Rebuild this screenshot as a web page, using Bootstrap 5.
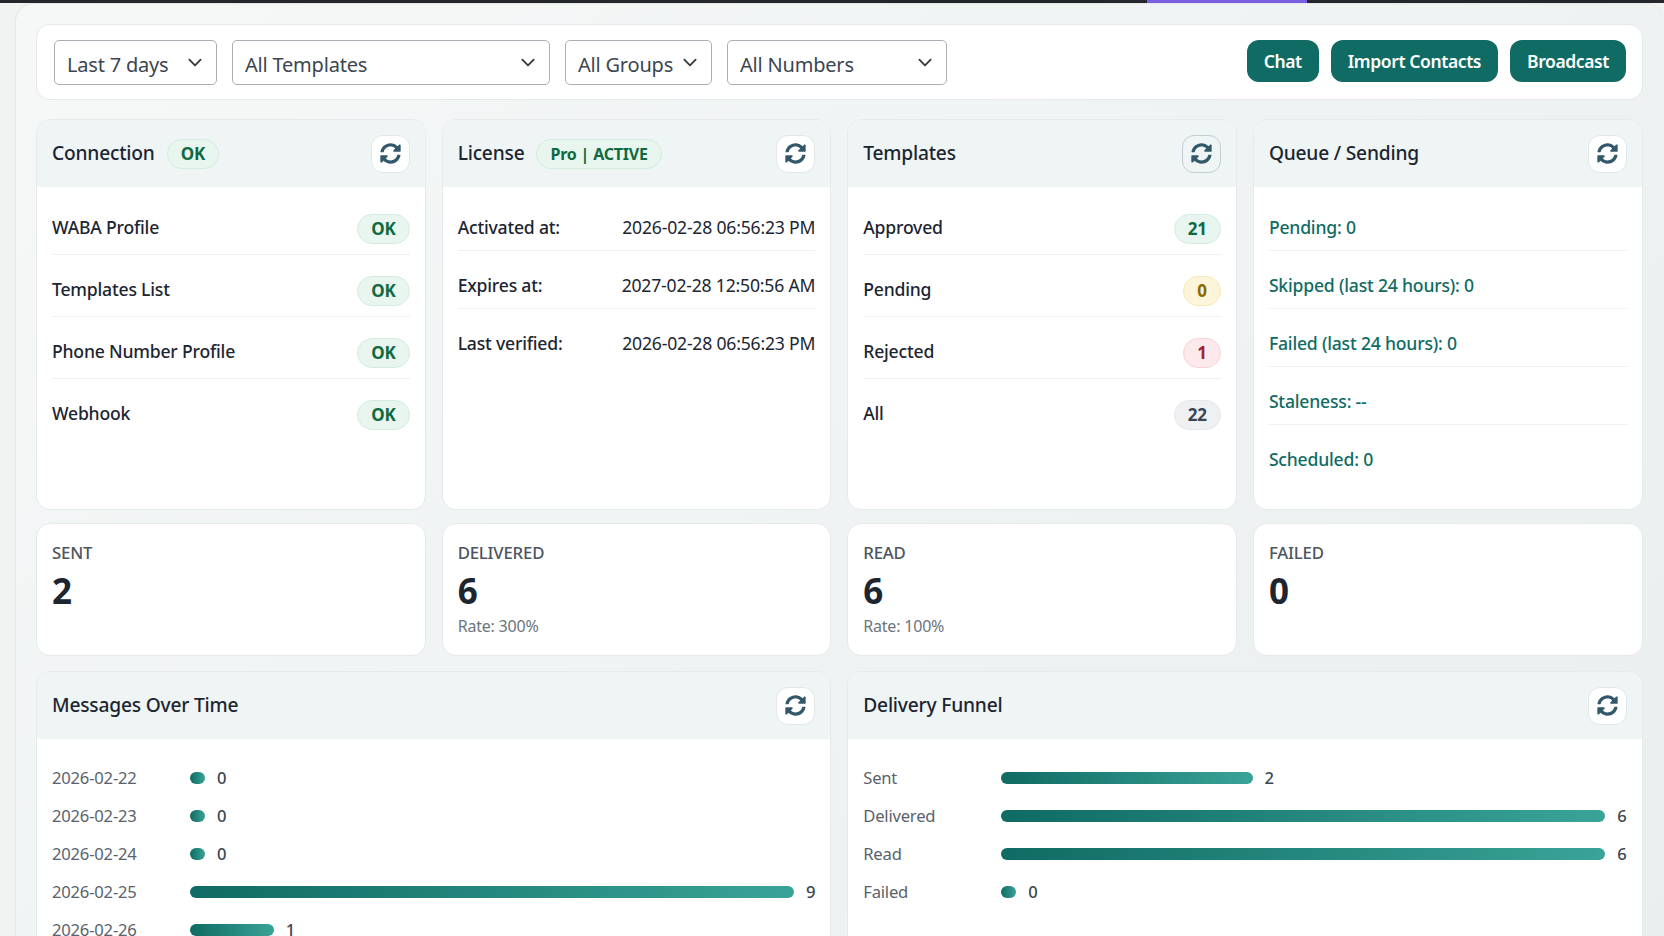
<!DOCTYPE html>
<html lang="en">
<head>
<meta charset="utf-8">
<title>Dashboard</title>
<link rel="stylesheet" href="https://cdn.jsdelivr.net/npm/bootstrap@5.3.0/dist/css/bootstrap.min.css">
<style>
html,body{height:100%;overflow:hidden}
body{background:#f1f2f2;font-family:"Noto Sans","Open Sans",sans-serif;font-size:17.6px;color:#1c2530;letter-spacing:-.2px}
.topstrip{height:3px;background:#23272b;display:flex}
.topstrip i{display:block;width:160px;margin-left:1147px;background:#7a5fe0}
.shell{margin-left:15px;padding:20px 21.5px 0 20px;min-height:100%;border:1px solid #e4e7e7;border-width:1px 0 0 1px;border-radius:18px 18px 0 0;background:linear-gradient(135deg,#f6f8f8,#e9eeee)}
.panel{border:1px solid #e6eaea;border-radius:14px;background:#fff}
.filterbar{height:76px;padding:0 15.5px 0 17px;margin-bottom:19px}
.pick-group{gap:15px}
.act-group{gap:12px;margin-bottom:2px}
.pick{height:45px;border:1px solid #a9afb5;border-radius:5px;font-size:20px;color:#3c4650;padding:6px 38px 0 12px;background-position:right 11px center;background-size:20px 15px;letter-spacing:-.2px}
.pick-a{width:163px}.pick-b{width:318px}.pick-c{width:147px}.pick-d{width:220px}
.act{height:42px;border-radius:12px;background:#0f6b63;border:0;color:#fff;font-size:17.5px;font-weight:600;padding:0 17px;letter-spacing:-.4px}
.act:hover{background:#0f6b63;color:#fff}
.tile{border:1px solid #e6eaea;border-radius:14px;overflow:hidden;background:#fff;--bs-card-bg:#fff}
.tile .card-header{height:67px;background:#eff4f5;border:0;padding:0 15px;display:flex;align-items:center;gap:12px;border-radius:0}
.tile-title{font-size:19.2px;font-weight:500;color:#1c2530}
.tall{height:391px}
.gap-after-top{margin-bottom:13px}
.gap-after-stats{margin-bottom:15px}
.spin{width:39px;height:38px;margin-left:auto;border:1px solid #e3e7ea;border-radius:12px;background:#fff;padding:0;display:flex;align-items:center;justify-content:center}
.spin svg{width:21px;height:21px;fill:#33586a}
.spin-on{background:#eff4f5;border-color:#c3cdd6}
.pill{display:inline-flex;align-items:center;justify-content:center;height:30px;padding:0 13px;border-radius:15px;border:1px solid #d2ecdd;background:#e9f6ef;color:#0f6b3f;font-weight:700;font-size:17px}
.pill-wide{font-size:16px}
.pill-warn{background:#fdf5d9;border-color:#f6e9b5;color:#8a6a00}
.pill-bad{background:#fce9eb;border-color:#f6d3d7;color:#a3212f}
.pill-mute{background:#eef0f2;border-color:#e5e8eb;color:#3a4652}
.tile .card-body{padding:6px 15px}
.line{border-bottom:1px solid #eef0f1;display:flex;align-items:center;justify-content:space-between}
.line:last-child{border-bottom:0}
.line-a{height:62px;padding-top:10px;font-weight:500}
.line-a>span:first-child{margin-top:-3px}
.line-b{height:58px;padding-top:11px}
.line-b b{font-weight:500}
.line-c{height:58px;padding-top:11px;color:#0f6b63;font-weight:500}
.stat{height:133px}
.tile .stat-body{padding:17.5px 15px}
.stat-name{font-size:16.8px;color:#4c5560;line-height:22px;font-weight:500}
.stat-num{font-size:35px;font-weight:700;line-height:46px;color:#1c2530;margin-top:4px}
.stat-sub{font-size:16px;color:#6c757d;line-height:22px;margin-top:1px}
.tile .chart-body{padding:20.5px 15px}
.barline{height:38px;display:flex;align-items:center;font-size:16.6px;color:#59626c}
.barname{width:138px;flex:none}
.bartrack{flex:1;display:flex;align-items:center;gap:12px;min-width:0}
.barfill{height:12px;border-radius:6px;background:linear-gradient(90deg,#0f6b63,#3aa397);flex:none}
.barval{color:#3c4650;font-weight:500}
</style>
</head>
<body>
<div class="topstrip"><i></i></div>
<main class="shell">
  <div class="panel filterbar d-flex align-items-center">
    <div class="d-flex pick-group">
      <select class="form-select pick pick-a"><option>Last 7 days</option></select>
      <select class="form-select pick pick-b"><option>All Templates</option></select>
      <select class="form-select pick pick-c"><option>All Groups</option></select>
      <select class="form-select pick pick-d"><option>All Numbers</option></select>
    </div>
    <div class="d-flex act-group ms-auto">
      <button class="btn act">Chat</button>
      <button class="btn act">Import Contacts</button>
      <button class="btn act">Broadcast</button>
    </div>
  </div>

  <svg width="0" height="0" class="d-block"><defs><symbol id="sync" viewBox="0 0 512 512"><path d="M370.72 133.28C339.458 104.008 298.888 87.962 255.848 88c-77.458.068-144.328 53.178-162.791 126.85-1.344 5.363-6.122 9.15-11.651 9.15H24.103c-7.498 0-13.194-6.807-11.807-14.176C33.933 94.924 134.813 8 256 8c66.448 0 126.791 26.136 171.315 68.685L463.03 40.97C478.149 25.851 504 36.559 504 57.941V192c0 13.255-10.745 24-24 24H345.941c-21.382 0-32.09-25.851-16.971-40.971l41.75-41.749zM32 296h134.059c21.382 0 32.09 25.851 16.971 40.971l-41.75 41.75c31.262 29.273 71.835 45.319 114.876 45.28 77.418-.07 144.315-53.144 162.787-126.849 1.344-5.363 6.122-9.15 11.651-9.15h57.304c7.498 0 13.193 6.807 11.807 14.176C478.067 417.076 377.187 504 256 504c-66.448 0-126.791-26.136-171.315-68.685L48.97 471.03C33.851 486.149 8 475.441 8 454.059V320c0-13.255 10.745-24 24-24z"/></symbol></defs></svg>

  <div class="row g-3 gap-after-top">
    <div class="col-3">
      <div class="card tile tall">
        <div class="card-header"><span class="tile-title">Connection</span><span class="pill">OK</span><button class="btn spin"><svg><use href="#sync"/></svg></button></div>
        <div class="card-body">
          <div class="line line-a"><span>WABA Profile</span><span class="pill">OK</span></div>
          <div class="line line-a"><span>Templates List</span><span class="pill">OK</span></div>
          <div class="line line-a"><span>Phone Number Profile</span><span class="pill">OK</span></div>
          <div class="line line-a"><span>Webhook</span><span class="pill">OK</span></div>
        </div>
      </div>
    </div>
    <div class="col-3">
      <div class="card tile tall">
        <div class="card-header"><span class="tile-title">License</span><span class="pill pill-wide">Pro | ACTIVE</span><button class="btn spin"><svg><use href="#sync"/></svg></button></div>
        <div class="card-body">
          <div class="line line-b"><b>Activated at:</b><span>2026-02-28 06:56:23 PM</span></div>
          <div class="line line-b"><b>Expires at:</b><span>2027-02-28 12:50:56 AM</span></div>
          <div class="line line-b"><b>Last verified:</b><span>2026-02-28 06:56:23 PM</span></div>
        </div>
      </div>
    </div>
    <div class="col-3">
      <div class="card tile tall">
        <div class="card-header"><span class="tile-title">Templates</span><button class="btn spin spin-on"><svg><use href="#sync"/></svg></button></div>
        <div class="card-body">
          <div class="line line-a"><span>Approved</span><span class="pill">21</span></div>
          <div class="line line-a"><span>Pending</span><span class="pill pill-warn">0</span></div>
          <div class="line line-a"><span>Rejected</span><span class="pill pill-bad">1</span></div>
          <div class="line line-a"><span>All</span><span class="pill pill-mute">22</span></div>
        </div>
      </div>
    </div>
    <div class="col-3">
      <div class="card tile tall">
        <div class="card-header"><span class="tile-title">Queue / Sending</span><button class="btn spin"><svg><use href="#sync"/></svg></button></div>
        <div class="card-body">
          <div class="line line-c">Pending: 0</div>
          <div class="line line-c">Skipped (last 24 hours): 0</div>
          <div class="line line-c">Failed (last 24 hours): 0</div>
          <div class="line line-c">Staleness: --</div>
          <div class="line line-c">Scheduled: 0</div>
        </div>
      </div>
    </div>
  </div>

  <div class="row g-3 gap-after-stats">
    <div class="col-3"><div class="card tile stat"><div class="card-body stat-body"><div class="stat-name">SENT</div><div class="stat-num">2</div></div></div></div>
    <div class="col-3"><div class="card tile stat"><div class="card-body stat-body"><div class="stat-name">DELIVERED</div><div class="stat-num">6</div><div class="stat-sub">Rate: 300%</div></div></div></div>
    <div class="col-3"><div class="card tile stat"><div class="card-body stat-body"><div class="stat-name">READ</div><div class="stat-num">6</div><div class="stat-sub">Rate: 100%</div></div></div></div>
    <div class="col-3"><div class="card tile stat"><div class="card-body stat-body"><div class="stat-name">FAILED</div><div class="stat-num">0</div></div></div></div>
  </div>

  <div class="row g-3">
    <div class="col-6">
      <div class="card tile h-100">
        <div class="card-header"><span class="tile-title">Messages Over Time</span><button class="btn spin"><svg><use href="#sync"/></svg></button></div>
        <div class="card-body chart-body">
          <div class="barline"><span class="barname">2026-02-22</span><div class="bartrack"><div class="barfill" style="width:15px"></div><span class="barval">0</span></div></div>
          <div class="barline"><span class="barname">2026-02-23</span><div class="bartrack"><div class="barfill" style="width:15px"></div><span class="barval">0</span></div></div>
          <div class="barline"><span class="barname">2026-02-24</span><div class="bartrack"><div class="barfill" style="width:15px"></div><span class="barval">0</span></div></div>
          <div class="barline"><span class="barname">2026-02-25</span><div class="bartrack"><div class="barfill" style="width:96.6%"></div><span class="barval">9</span></div></div>
          <div class="barline"><span class="barname">2026-02-26</span><div class="bartrack"><div class="barfill" style="width:13.4%"></div><span class="barval">1</span></div></div>
        </div>
      </div>
    </div>
    <div class="col-6">
      <div class="card tile h-100">
        <div class="card-header"><span class="tile-title">Delivery Funnel</span><button class="btn spin"><svg><use href="#sync"/></svg></button></div>
        <div class="card-body chart-body">
          <div class="barline"><span class="barname">Sent</span><div class="bartrack"><div class="barfill" style="width:40.2%"></div><span class="barval">2</span></div></div>
          <div class="barline"><span class="barname">Delivered</span><div class="bartrack"><div class="barfill" style="width:96.6%"></div><span class="barval">6</span></div></div>
          <div class="barline"><span class="barname">Read</span><div class="bartrack"><div class="barfill" style="width:96.6%"></div><span class="barval">6</span></div></div>
          <div class="barline"><span class="barname">Failed</span><div class="bartrack"><div class="barfill" style="width:15px"></div><span class="barval">0</span></div></div>
        </div>
      </div>
    </div>
  </div>
</main>
<script src="https://cdn.jsdelivr.net/npm/bootstrap@5.3.0/dist/js/bootstrap.bundle.min.js"></script>
</body>
</html>
